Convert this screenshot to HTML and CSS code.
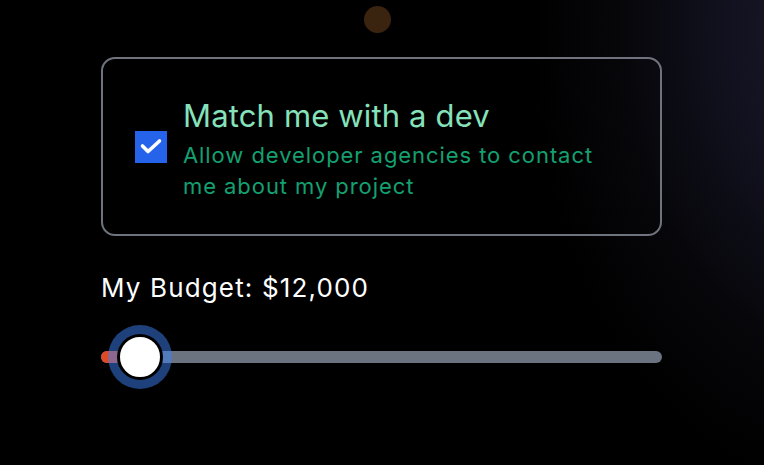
FILE: index.html
```html
<!DOCTYPE html>
<html>
<head>
<meta charset="utf-8">
<link rel="stylesheet" href="styles.css">
</head>
<body>
<div class="page">
  <div class="dot"></div>
  <main class="content">
    <label class="card">
      <span class="checkbox">
        <svg viewBox="0 0 32 32" width="32" height="32"><path d="M7.5 15 L13 20.5 L24.5 10" fill="none" stroke="#fff" stroke-width="3.6" stroke-linecap="round" stroke-linejoin="round"/></svg>
      </span>
      <span class="card-text">
        <span class="card-title">Match me with a dev</span>
        <span class="card-sub">Allow developer agencies to contact me about my project</span>
      </span>
    </label>
    <div class="budget">
      <div class="budget-label">My Budget: $12,000</div>
      <div class="slider">
        <div class="track"><div class="fill"></div></div>
        <div class="thumb"></div>
      </div>
    </div>
  </main>
</div>
</body>
</html>
```
FILE: styles.css
```css
html, body {
  margin: 0;
  padding: 0;
  background: #000;
}
body {
  font-family: Inter, "Noto Sans", "Liberation Sans", sans-serif;
  width: 764px;
  height: 465px;
  overflow: hidden;
}
.page {
  position: relative;
  width: 764px;
  height: 465px;
  background:
    radial-gradient(ellipse 320px 460px at 850px 30px, #1b1a29 0%, #131221 35%, #07070b 70%, rgba(0,0,0,0) 100%),
    #000;
}
.dot {
  position: absolute;
  left: 364px;
  top: 6px;
  width: 27px;
  height: 27px;
  border-radius: 50%;
  background: #3a240f;
}
.content {
  display: flex;
  flex-direction: column;
  padding: 57px 0 0 101px;
  width: 561px;
}
.card {
  box-sizing: border-box;
  height: 179px;
  border: 2px solid #6e737d;
  border-radius: 14px;
  display: flex;
  align-items: center;
  padding: 0 32px;
  gap: 16px;
}
.checkbox {
  flex: none;
  width: 32px;
  height: 32px;
  background: #2563eb;
  display: flex;
}
.card-text {
  display: flex;
  flex-direction: column;
  width: 440px;
  margin-top: 7px;
}
.card-title {
  font-size: 31px;
  line-height: 36px;
  color: #86e2bb;
  letter-spacing: 0.15px;
  margin-bottom: 6px;
}
.card-sub {
  font-size: 22px;
  line-height: 31px;
  color: #14a070;
  letter-spacing: 0.93px;
}
.budget {
  padding-top: 37px;
}
.budget-label {
  font-size: 26px;
  line-height: 30px;
  color: #fff;
  letter-spacing: 1.15px;
}
.slider {
  position: relative;
  margin-top: 22px;
  height: 64px;
  display: flex;
  align-items: center;
}
.track {
  width: 100%;
  height: 12px;
  border-radius: 6px;
  background: #6b7280;
  overflow: hidden;
}
.fill {
  width: 39px;
  height: 100%;
  background: #dc4a28;
}
.thumb {
  position: absolute;
  left: 16px;
  top: 9px;
  width: 40px;
  height: 40px;
  border-radius: 50%;
  background: #fff;
  border: 3px solid #000;
  box-shadow: 0 0 0 9px rgba(59, 130, 246, 0.5);
}
```
